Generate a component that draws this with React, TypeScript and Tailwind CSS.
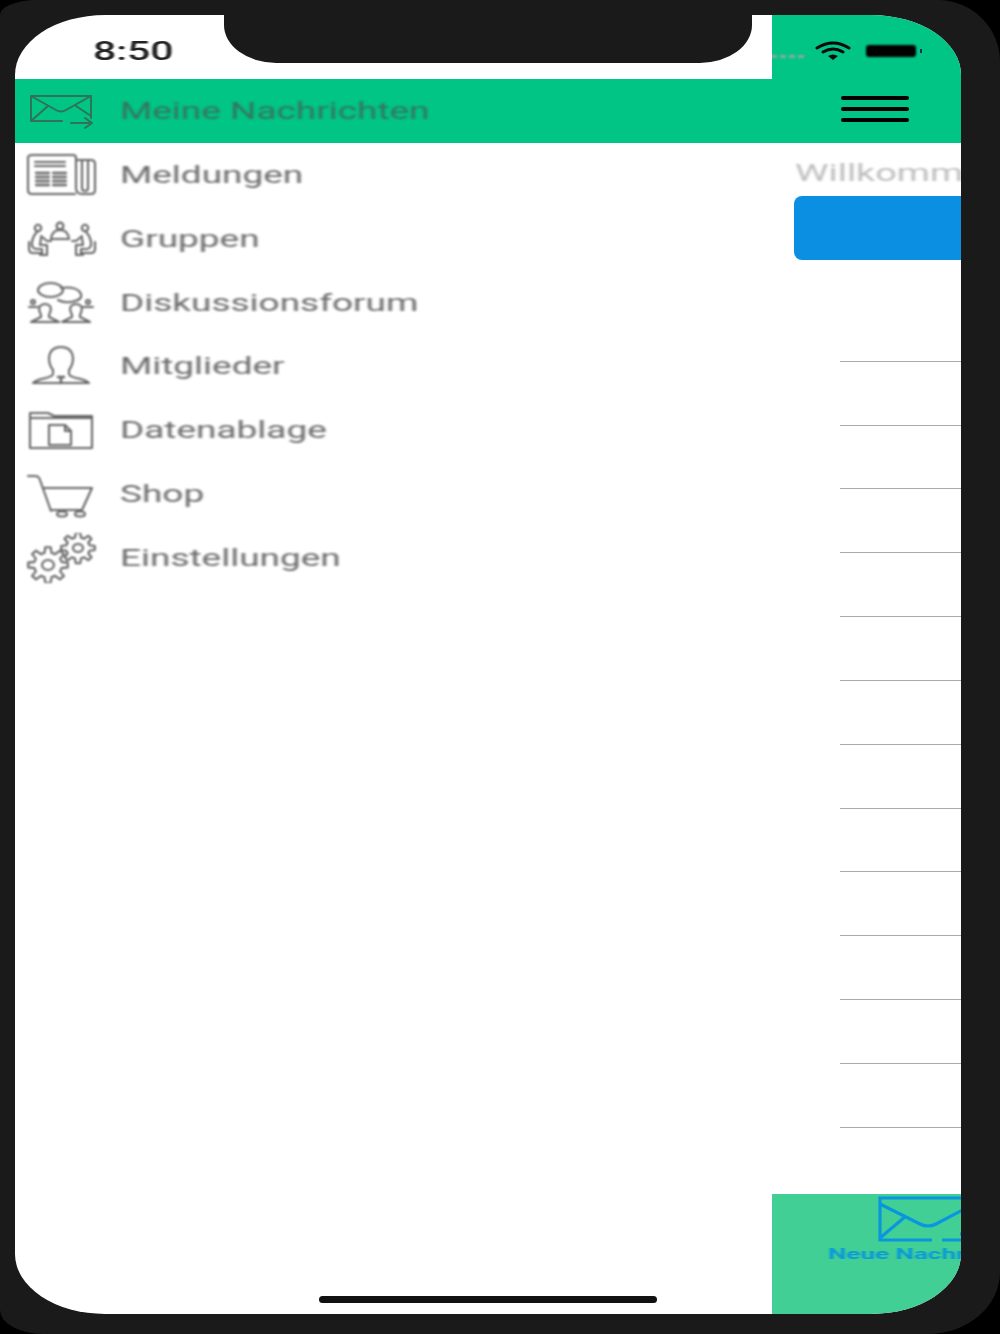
const gear = (cx: number, cy: number, ro: number, ri: number, teeth: number) => {
  const pts: string[] = [];
  const step = (Math.PI * 2) / teeth;
  for (let i = 0; i < teeth; i++) {
    const a = i * step;
    const angles: [number, number][] = [
      [a - step * 0.32, ri],
      [a - step * 0.17, ro],
      [a + step * 0.17, ro],
      [a + step * 0.32, ri],
    ];
    angles.forEach(([t, r]) => pts.push(`${(cx + r * Math.cos(t)).toFixed(1)} ${(cy + r * Math.sin(t) * 0.9).toFixed(1)}`));
  }
  return `M${pts.join("L")}Z`;
};

const Svg = ({ children }: { children: React.ReactNode }) => (
  <svg viewBox="0 0 72 50" className="w-[72px] h-[50px] blur-[0.8px]" fill="none" stroke="#666" strokeWidth="2.1" strokeLinecap="round" strokeLinejoin="round">
    {children}
  </svg>
);

const MailOut = () => (
  <svg viewBox="0 0 72 50" className="w-[72px] h-[50px] blur-[0.7px]" fill="none" stroke="#2f7358" strokeWidth="2" strokeLinecap="round" strokeLinejoin="round">
    <path d="M34 35H3V10H63V32M3 10L28 24Q33 27 38 24L63 10M3 35L20 20M63 30L48 20" />
    <path d="M43 37H63M57 32L64 37L57 42" />
  </svg>
);
const News = () => (
  <Svg>
    <path d="M48 44H5Q1 44 1 40V8Q1 5 5 5H46Q49 5 49 8V38Q49 44 55 44H64Q68 44 68 40V14Q68 10 64 10H49" />
    <path d="M55 10V38Q55 41 58 41Q61 41 61 38V10" />
    <path d="M8 12H38M8 16H38" />
    <path d="M9 23H22M9 27H22M9 31H22M9 35H22M26 23H39M26 27H39M26 31H39M26 35H39" strokeWidth="2.3" />
  </Svg>
);
const Groups = () => (
  <Svg>
    <circle cx="33" cy="12" r="3.4" />
    <path d="M24 25Q25 16 33 16Q41 16 42 25Z" />
    <circle cx="11" cy="14" r="3.2" />
    <circle cx="58" cy="14" r="3.2" />
    <path d="M10 18Q6 22 5 28Q4 34 9 35H15V41H20V31H13L14 24" />
    <path d="M2 28V35Q2 39 6 39H13V41" />
    <path d="M14 22L20 27H24" />
    <path d="M59 18Q63 22 64 28Q65 34 60 35H54V41H49V31H56L55 24" />
    <path d="M68 28V35Q68 39 64 39H56V41" />
    <path d="M55 22L49 27H45" />
  </Svg>
);
const Forum = () => (
  <Svg>
    <ellipse cx="23.5" cy="12" rx="12.5" ry="7" />
    <path d="M34 10Q46 8 52 13Q58 20 48 23Q38 26 31 22" />
    <circle cx="6" cy="24" r="2" />
    <circle cx="61" cy="24" r="2" />
    <path d="M2 29H11M56 29H66" />
    <path d="M14 37Q11 31 13 28Q18 24 23 28Q25 31 22 37V39L32 44H4L14 39Z" />
    <path d="M45 37Q42 31 44 28Q49 24 54 28Q56 31 53 37V39L63 44H35L45 39Z" />
  </Svg>
);
const Member = () => (
  <Svg>
    <path d="M26 29Q22 24 22 17Q23 6 34 6Q45 6 46 17Q46 24 42 29V33Q42 35 49 37Q59 39 62 42H6Q9 39 19 37Q26 35 26 33Z" />
    <path d="M34 36V42M31 36H37" strokeWidth="2.6" />
  </Svg>
);
const Folder = () => (
  <Svg>
    <path d="M3 43V8H21L27 11H65V43Z" />
    <path d="M3 13H65" />
    <path d="M22 20H38L44 26V40H22Z" />
    <path d="M38 20V26H44" />
  </Svg>
);
const Cart = () => (
  <Svg>
    <path d="M1 7H8Q12 7 13 11L24 42" />
    <path d="M16 19H65L55 41H25" />
    <ellipse cx="35" cy="45" rx="5" ry="2.5" />
    <ellipse cx="53" cy="45" rx="5" ry="2.5" />
  </Svg>
);
const Gears = () => (
  <Svg>
    <path d={gear(21, 32, 20, 14, 8)} />
    <ellipse cx="21" cy="32" rx="6" ry="5" />
    <path d={gear(51, 15, 17, 12, 8)} />
    <ellipse cx="51" cy="15" rx="5" ry="4" />
  </Svg>
);

const items = [
  { label: "Meldungen", Icon: News },
  { label: "Gruppen", Icon: Groups },
  { label: "Diskussionsforum", Icon: Forum },
  { label: "Mitglieder", Icon: Member },
  { label: "Datenablage", Icon: Folder },
  { label: "Shop", Icon: Cart },
  { label: "Einstellungen", Icon: Gears },
];

const stretched = "inline-block origin-left scale-x-[1.54] whitespace-nowrap blur-[0.9px]";

export default function App() {
  return (
    <div className="w-[1000px] h-[1334px] bg-black overflow-hidden" style={{ fontFamily: "Roboto, sans-serif" }}>
      <div className="w-full h-full bg-[#1a1a1a] pt-[15px] pl-[15px] pr-[39px] pb-[20px] rounded-tl-[36px_15px] rounded-tr-[62px_62px] rounded-br-[72px_62px] rounded-bl-[44px_24px]">
        <div className="relative w-full h-full flex overflow-hidden rounded-[90px/60px] bg-white">
          {/* notch */}
          <div className="absolute left-[209px] top-0 w-[528px] h-[48px] bg-[#1a1a1a] rounded-b-[52px_38px] z-10 blur-[0.5px]" />
          <div className="absolute left-[304px] bottom-[11px] w-[338px] h-[7px] bg-[#111] rounded-full z-10" />

          {/* drawer */}
          <div className="w-[757px] shrink-0 flex flex-col">
            <div className="h-[64px] pl-[78px] pt-[20px] leading-[32px]">
              <span className="inline-block origin-left scale-x-[1.575] whitespace-nowrap blur-[0.7px] text-[26px] font-medium text-[#222]">8:50</span>
            </div>
            <div className="h-[64px] bg-[#00c585] flex items-center">
              <div className="w-[105px] pl-[13px] shrink-0">
                <MailOut />
              </div>
              <span className={`${stretched} text-[24px] text-[#35755c]`}>Meine Nachrichten</span>
            </div>
            {items.map(({ label, Icon }) => (
              <div key={label} className="h-[63.83px] flex items-center">
                <div className="w-[105px] pl-[12px] shrink-0">
                  <Icon />
                </div>
                <span className={`${stretched} text-[24px] text-[#6a6a6a]`}>{label}</span>
              </div>
            ))}
          </div>

          {/* page behind the drawer */}
          <div className="flex-1 min-w-0 flex flex-col overflow-hidden">
            <div className="h-[128px] bg-[#00c585] relative shrink-0 flex flex-col">
              <div className="h-[64px] flex items-start">
                <div className="ml-[-10px] mt-[40px] w-[42px] border-t-[3px] border-dashed border-[#8fa99c] blur-[1px]" />
                <svg viewBox="0 0 36 20" className="ml-[11px] mt-[26px] w-[36px] h-[20px] blur-[0.4px]" fill="none" stroke="#0a0a0a" strokeWidth="3" strokeLinecap="round">
                  <path d="M2 7Q18 -3 34 7M8 11Q18 5 28 11" />
                  <path d="M13 15Q18 12 23 15L18 19Z" fill="#0a0a0a" stroke="none" />
                </svg>
                <div className="ml-[15px] mt-[30px] w-[50px] h-[12px] bg-black rounded-[3px] blur-[0.8px]" />
                <div className="ml-[4px] mt-[34px] w-[2px] h-[4px] bg-[#235] blur-[0.5px]" />
              </div>
              <div className="flex flex-col gap-[7px] ml-[69px] mt-[17px] w-[68px] blur-[0.6px]">
                <div className="h-[4px] bg-black rounded-full" />
                <div className="h-[4px] bg-black rounded-full" />
                <div className="h-[4px] bg-black rounded-full" />
              </div>
            </div>
            <div className="h-[53px] shrink-0 pl-[23px] pt-[13px] leading-[34px]">
              <span className="inline-block origin-left scale-x-[1.575] whitespace-nowrap blur-[0.9px] text-[24px] text-[#bdbdbd]">Willkommen</span>
            </div>
            <div className="h-[64px] shrink-0 ml-[22px] bg-[#0a8fe2] rounded-l-[8px] blur-[0.4px]" />
            <div className="mt-[38px] shrink-0">
              {Array.from({ length: 13 }).map((_, i) => (
                <div key={i} className="h-[63.83px] ml-[68px] border-b border-[#aaaaaa]" />
              ))}
            </div>
            <div className="mt-auto h-[120px] bg-[#42cf96] pt-[2px] overflow-hidden">
              <svg viewBox="0 0 100 46" className="ml-[106px] w-[100px] h-[46px] blur-[0.4px]" fill="none" stroke="#0a96dc" strokeWidth="3.2">
                <path d="M54 44H2V2H96V44H64M2 8L42 28Q50 32 58 28L96 8M2 42L28 20" />
                <path d="M82 38H96" />
              </svg>
              <div className="pl-[56px] mt-[2px] leading-[20px]">
                <span className="inline-block origin-left scale-x-[1.68] whitespace-nowrap blur-[0.7px] text-[15.5px] font-bold text-[#0a9ad8]">Neue Nachricht</span>
              </div>
            </div>
          </div>
        </div>
      </div>
    </div>
  );
}
